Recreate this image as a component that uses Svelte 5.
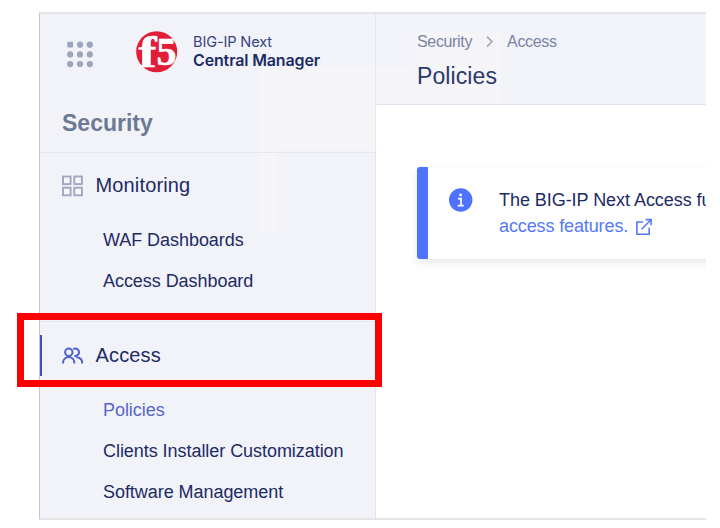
<script>
  const monitoring = ['WAF Dashboards', 'Access Dashboard'];
  const access = ['Policies', 'Clients Installer Customization', 'Software Management'];
  const dots = [0, 1, 2, 3, 4, 5, 6, 7, 8];
</script>

<div class="page">
  <div class="window">
    <aside>
      <div class="brand">
        <svg class="dots" width="26" height="28" viewBox="0 0 26 28">
          {#each dots as d}
            {#if d === 0}
              <rect x="0.3" y="0.8" width="5.8" height="5.6" rx="0.8" />
            {:else}
              <circle cx={3.2 + (d % 3) * 9.8} cy={3.7 + Math.floor(d / 3) * 9.7} r="3.1" />
            {/if}
          {/each}
        </svg>
        <svg class="logo" width="42" height="42" viewBox="0 0 42 42">
          <circle cx="20.7" cy="20.7" r="20.5" fill="#e21d38" />
          <text class="f" transform="translate(2.5 36) scale(1.2 1)">f</text>
          <text class="five" transform="translate(20.5 34) scale(1 1)">5</text>
        </svg>
        <div class="product">
          <span class="line1">BIG-IP Next</span>
          <span class="line2">Central Manager</span>
        </div>
      </div>
      <div class="area">Security</div>
      <nav>
        <section>
          <div class="head">
            <svg width="22" height="22" viewBox="0 0 22 22" fill="#f6f7fb" stroke="#a2a6c0" stroke-width="1.9">
              <rect x="1" y="1.5" width="7.6" height="7.6" />
              <rect x="12.3" y="1.5" width="7.6" height="7.6" />
              <rect x="1" y="12.7" width="7.6" height="7.6" />
              <rect x="12.3" y="12.7" width="7.6" height="7.6" />
            </svg>
            <span class="mon">Monitoring</span>
          </div>
          {#each monitoring as item}
            <div class="sub">{item}</div>
          {/each}
        </section>
        <section class="current">
          <div class="head">
            <svg width="22" height="17" viewBox="0 0 22 17" fill="none" stroke="#4d62ca" stroke-width="2">
              <circle cx="6.8" cy="5.2" r="3.7" />
              <path d="M11.2 2.2A3.7 3.7 0 1 1 13.6 8.9H12.4" />
              <path d="M1.1 16.6v-1.3a5.6 5.2 0 0 1 11.2 0v1.3" />
              <path d="M14.2 10.3a5.5 5 0 0 1 5.9 5v1.3" />
            </svg>
            <span class="acc">Access</span>
          </div>
          {#each access as item, i}
            <div class="sub" class:active={i === 0}>{item}</div>
          {/each}
        </section>
      </nav>
    </aside>
    <main>
      <header>
        <div class="crumbs">
          <span>Security</span>
          <svg width="8" height="12" viewBox="0 0 8 12" fill="none" stroke="#a3a9b9" stroke-width="1.6"><path d="M1 .6l5 5-5 5" /></svg>
          <span>Access</span>
        </div>
        <h1>Policies</h1>
      </header>
      <div class="notice">
        <svg width="24" height="24" viewBox="0 0 24 24">
          <circle cx="11.7" cy="12" r="11.7" fill="#4f73ff" />
          <circle cx="11.6" cy="7" r="1.4" fill="#fff" />
          <path d="M9 10.6h3v7M8.7 17.6h6" fill="none" stroke="#fff" stroke-width="1.7" />
        </svg>
        <div class="message">
          <div class="n1">The BIG-IP Next Access fu</div>
          <div class="n2">
            <span>access features.</span>
            <svg width="16" height="17" viewBox="0 0 16 17" fill="none" stroke="#5578fb" stroke-width="1.6">
              <path d="M7.2 4H0.9v12.2h12.3V9.8M9.6 1.6h5.5v5.6M15 1.7L5.6 11.2" />
            </svg>
          </div>
        </div>
      </div>
    </main>
  </div>
  <div class="highlight"></div>
</div>

<style>
  :global(body) { background: #fff; }
  .page {
    position: relative;
    box-sizing: border-box;
    width: 720px;
    height: 528px;
    padding: 12px 14px 8px 39px;
    overflow: hidden;
    font-family: "Liberation Sans", Arial, sans-serif;
    color: #1c2b64;
  }
  .window {
    box-sizing: border-box;
    display: flex;
    width: 667px;
    height: 508px;
    overflow: hidden;
    border-top: 2px solid #e6e6e9;
    border-bottom: 2px solid #e4e4e4;
    border-left: 1px solid #c5c6cb;
  }
  svg { display: block; flex: none; }
  span, .sub, h1, .area, .n1 { white-space: nowrap; }
  aside {
    box-sizing: border-box;
    flex: none;
    width: 336px;
    border-right: 1px solid #e2e4f0;
    background:
      linear-gradient(#f5f5f8, #f5f5f8) 218px 52px / 118px 84px no-repeat,
      linear-gradient(#f5f5f8, #f5f5f8) 218px 136px / 20px 82px no-repeat,
      #f2f3f9;
  }
  .brand { display: flex; height: 80px; padding-left: 27px; box-sizing: border-box; }
  .dots { margin-top: 27px; fill: #9ca5bb; }
  .logo { margin: 17px 0 0 43px; overflow: visible; }
  .logo text {
    fill: #fff;
    font-family: "Liberation Serif", serif;
    font-weight: 700;
    stroke: #fff;
    stroke-width: .6px;
  }
  .logo .f { font-size: 45px; }
  .logo .five { font-size: 40px; }
  .product {
    display: flex;
    flex-direction: column;
    padding-top: 20px;
    margin-left: 15px;
    font-family: Inter, sans-serif;
  }
  .line1 { font-size: 14.6px; line-height: 17px; color: #36437e; letter-spacing: -.15px; }
  .line2 { font-size: 16px; line-height: 19px; font-weight: 600; letter-spacing: -.14px; }
  .area {
    box-sizing: border-box;
    height: 59px;
    padding: 16px 0 0 22px;
    border-bottom: 1px solid #e4e6f0;
    font-size: 23px;
    line-height: 27px;
    font-weight: 700;
    color: #6d7a94;
  }
  .head {
    display: flex;
    align-items: center;
    gap: 12px;
    height: 66px;
    padding-left: 22px;
    font-size: 20px;
  }
  .head span { margin-left: -.5px; letter-spacing: .15px; }
  .mon { padding-bottom: 2px; }
  .sub {
    box-sizing: border-box;
    height: 41px;
    padding: 1px 0 0 63px;
    font-size: 18px;
    line-height: 41px;
    letter-spacing: -.05px;
  }
  .current {
    margin-top: 20px;
    border-top: 1px solid #e4e6f0;
    background: linear-gradient(#3d50c0, #3d50c0) 0 13px / 2px 41px no-repeat;
  }
  .current .sub { padding-top: 2px; }
  .sub.active { color: #5766c9; }
  main { flex: 1; min-width: 0; }
  header {
    box-sizing: border-box;
    height: 91px;
    padding: 17px 0 0 41px;
    border-bottom: 1px solid #e2e4f0;
    background:
      linear-gradient(#f5f5f8, #f5f5f8) 0 52px / 39px 38px no-repeat,
      linear-gradient(#f5f5f8, #f5f5f8) 39px 18px / 87px 72px no-repeat,
      #f2f3f9;
  }
  .crumbs { display: flex; align-items: center; height: 21px; font-size: 16px; color: #7a83a4; }
  .crumbs span { padding-top: 1px; letter-spacing: -.34px; }
  .crumbs svg { margin: 0 13px 0 14px; }
  h1 { margin: 11px 0 0; font-size: 23px; line-height: 27px; font-weight: 400; color: #2b3a6b; letter-spacing: .1px; }
  .notice {
    box-sizing: border-box;
    display: flex;
    width: 400px;
    height: 92px;
    margin: 62px 0 0 41px;
    padding: 21px 0 0 21px;
    border-left: 11px solid #4f73ff;
    border-radius: 3px;
    box-shadow: 0 4px 8px rgba(40, 45, 70, .1), 0 0 1px rgba(40, 45, 70, .14);
  }
  .message { margin: -1px 0 0 26px; font-size: 18px; line-height: 26px; letter-spacing: -.05px; }
  .n2 { display: flex; align-items: center; gap: 8px; color: #5578fb; letter-spacing: -.12px; }
  .highlight {
    position: absolute;
    box-sizing: border-box;
    left: 17px;
    top: 313px;
    width: 365px;
    height: 74px;
    border: 7px solid #f00;
  }
</style>
